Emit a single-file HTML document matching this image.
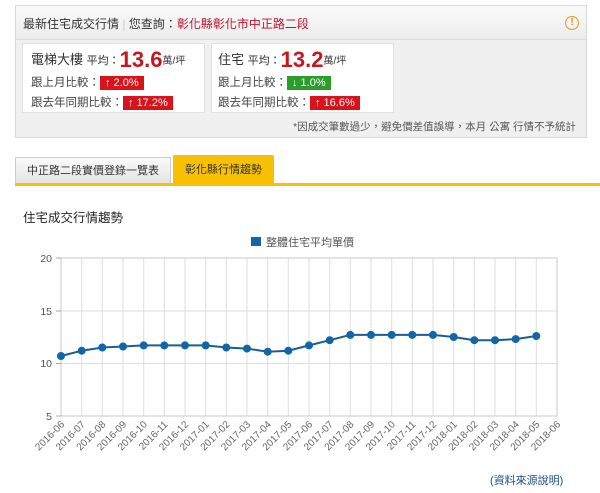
<!DOCTYPE html><html><head><meta charset="utf-8"><style>
body{margin:0;width:600px;height:493px;background:#fff;font-family:"Liberation Sans","Noto Sans CJK TC",sans-serif;position:relative;overflow:hidden;color:#333}
.a{position:absolute;white-space:nowrap}
.box{position:absolute;left:15px;top:5px;width:570px;height:131px;border:1px solid #d8d8d8;background:#f0f0f0}
.hd{position:absolute;left:0;top:0;width:570px;height:33px;background:linear-gradient(#fafafa,#ececec);border-bottom:1px solid #ddd}
.card{position:absolute;top:37px;width:181px;height:68px;background:#fff;border:1px solid #e2e2e2}
.tag{display:inline-block;color:#fff;font-size:11px;padding:0 5px;height:14px;line-height:14px;vertical-align:middle}
.r{background:#d9131b}.g{background:#2a9d2a}
.big{color:#c8161e;font-weight:bold;font-size:22px;vertical-align:-3px}
.ln{font-size:11.5px;color:#444}
</style></head><body>
<div class="box"><div class="hd"></div>
<div class="a" style="left:7px;top:9px;font-size:12px;color:#333">最新住宅成交行情 <span style="color:#ccc">|</span> 您查詢：<span style="color:#c3112b">彰化縣彰化市中正路二段</span></div>
<div class="a" style="left:549px;top:10px;width:12px;height:12px;border:1.5px solid #e39a1c;border-radius:50%;color:#e39a1c;font-size:10px;line-height:12px;text-align:center;font-weight:bold">!</div>
<div class="card" style="left:6px"><div class="a" style="left:8px;top:3px;font-size:13px">電梯大樓 <span style="font-size:11px">平均：</span><span class="big">13.6</span><span style="font-size:10px">萬/坪</span></div>
<div class="a ln" style="left:8px;top:30px">跟上月比較：<span class="tag r">↑ 2.0%</span></div>
<div class="a ln" style="left:8px;top:50px">跟去年同期比較：<span class="tag r">↑ 17.2%</span></div></div>
<div class="card" style="left:195px"><div class="a" style="left:6px;top:3px;font-size:13px">住宅 <span style="font-size:11px">平均：</span><span class="big">13.2</span><span style="font-size:10px">萬/坪</span></div>
<div class="a ln" style="left:6px;top:30px">跟上月比較：<span class="tag g">↓ 1.0%</span></div>
<div class="a ln" style="left:6px;top:50px">跟去年同期比較：<span class="tag r">↑ 16.6%</span></div></div>
<div class="a" style="right:10px;top:113px;font-size:10.5px;color:#555">*因成交筆數過少，避免價差值誤導，本月 公寓 行情不予統計</div>
</div>
<div class="a" style="left:15px;top:157px;width:154px;height:25px;background:linear-gradient(#fafafa,#e4e4e4);border:1px solid #ccc;border-bottom:none;font-size:11px;line-height:26px;text-align:center">中正路二段實價登錄一覽表</div>
<div class="a" style="left:173px;top:155px;width:101px;height:28px;background:#f7c000;border-radius:2px 2px 0 0;font-size:11px;line-height:30px;text-align:center">彰化縣行情趨勢</div>
<div class="a" style="left:15px;top:183px;width:585px;height:3px;background:#f7c000"></div>
<div class="a" style="left:23px;top:207px;font-size:12.5px;color:#222">住宅成交行情趨勢</div>
<svg class="a" style="left:0;top:0" width="600" height="493" font-family="Liberation Sans" font-size="10.5" fill="#555">
<rect x="251" y="237" width="10" height="9" fill="#1266a8"/><text x="266" y="246" font-size="11" font-family="Noto Sans CJK TC">整體住宅平均單價</text>
<g stroke="#ddd" stroke-width="1">
<line x1="61" y1="258" x2="557" y2="258"/><line x1="61" y1="311" x2="557" y2="311"/><line x1="61" y1="363.5" x2="557" y2="363.5"/>
<path d="M81.7 258V416M102.3 258V416M123 258V416M143.7 258V416M164.3 258V416M185 258V416M205.7 258V416M226.3 258V416M247 258V416M267.7 258V416M288.3 258V416M309 258V416M329.7 258V416M350.3 258V416M371 258V416M391.7 258V416M412.3 258V416M433 258V416M453.7 258V416M474.3 258V416M495 258V416M515.7 258V416M536.3 258V416"/>
</g>
<rect x="61" y="258" width="496" height="158" fill="none" stroke="#c8c8c8"/>
<g stroke="#aaa"><line x1="56" y1="258" x2="61" y2="258"/><line x1="56" y1="311" x2="61" y2="311"/><line x1="56" y1="363.5" x2="61" y2="363.5"/><line x1="56" y1="416" x2="61" y2="416"/></g>
<text x="52" y="262" text-anchor="end">20</text><text x="52" y="315" text-anchor="end">15</text><text x="52" y="367" text-anchor="end">10</text><text x="52" y="420" text-anchor="end">5</text>
<polyline fill="none" stroke="#1a5d94" stroke-width="2" points="61,356 81.7,350.7 102.3,347.5 123,346.5 143.7,345.4 164.3,345.4 185,345.4 205.7,345.4 226.3,347.5 247,348.6 267.7,351.7 288.3,350.7 309,345.4 329.7,340.2 350.3,334.9 371,334.9 391.7,334.9 412.3,334.9 433,334.9 453.7,337 474.3,340.2 495,340.2 515.7,339.1 536.3,336"/>
<g fill="#1266a8">
<circle cx="61" cy="356" r="4"/><circle cx="81.7" cy="350.7" r="4"/><circle cx="102.3" cy="347.5" r="4"/><circle cx="123" cy="346.5" r="4"/><circle cx="143.7" cy="345.4" r="4"/><circle cx="164.3" cy="345.4" r="4"/><circle cx="185" cy="345.4" r="4"/><circle cx="205.7" cy="345.4" r="4"/><circle cx="226.3" cy="347.5" r="4"/><circle cx="247" cy="348.6" r="4"/><circle cx="267.7" cy="351.7" r="4"/><circle cx="288.3" cy="350.7" r="4"/><circle cx="309" cy="345.4" r="4"/><circle cx="329.7" cy="340.2" r="4"/><circle cx="350.3" cy="334.9" r="4"/><circle cx="371" cy="334.9" r="4"/><circle cx="391.7" cy="334.9" r="4"/><circle cx="412.3" cy="334.9" r="4"/><circle cx="433" cy="334.9" r="4"/><circle cx="453.7" cy="337" r="4"/><circle cx="474.3" cy="340.2" r="4"/><circle cx="495" cy="340.2" r="4"/><circle cx="515.7" cy="339.1" r="4"/><circle cx="536.3" cy="336" r="4"/>
</g>
<g text-anchor="end" font-size="10" fill="#666">
<text transform="translate(65,425) rotate(-45)">2016-06</text><text transform="translate(85.7,425) rotate(-45)">2016-07</text><text transform="translate(106.3,425) rotate(-45)">2016-08</text><text transform="translate(127,425) rotate(-45)">2016-09</text><text transform="translate(147.7,425) rotate(-45)">2016-10</text><text transform="translate(168.3,425) rotate(-45)">2016-11</text><text transform="translate(189,425) rotate(-45)">2016-12</text><text transform="translate(209.7,425) rotate(-45)">2017-01</text><text transform="translate(230.3,425) rotate(-45)">2017-02</text><text transform="translate(251,425) rotate(-45)">2017-03</text><text transform="translate(271.7,425) rotate(-45)">2017-04</text><text transform="translate(292.3,425) rotate(-45)">2017-05</text><text transform="translate(313,425) rotate(-45)">2017-06</text><text transform="translate(333.7,425) rotate(-45)">2017-07</text><text transform="translate(354.3,425) rotate(-45)">2017-08</text><text transform="translate(375,425) rotate(-45)">2017-09</text><text transform="translate(395.7,425) rotate(-45)">2017-10</text><text transform="translate(416.3,425) rotate(-45)">2017-11</text><text transform="translate(437,425) rotate(-45)">2017-12</text><text transform="translate(457.7,425) rotate(-45)">2018-01</text><text transform="translate(478.3,425) rotate(-45)">2018-02</text><text transform="translate(499,425) rotate(-45)">2018-03</text><text transform="translate(519.7,425) rotate(-45)">2018-04</text><text transform="translate(540.3,425) rotate(-45)">2018-05</text><text transform="translate(561,425) rotate(-45)">2018-06</text>
</g>
</svg>
<div class="a" style="left:490px;top:472px;font-size:11px;color:#1a4f8a">(資料來源說明)</div>
</body></html>
